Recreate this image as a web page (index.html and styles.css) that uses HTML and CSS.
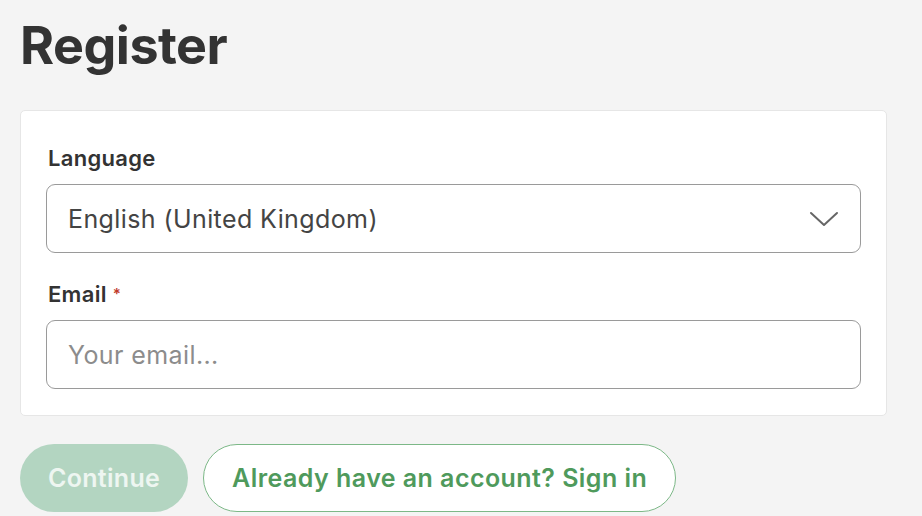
FILE: index.html
```html
<!DOCTYPE html>
<html lang="en">
<head>
    <meta charset="UTF-8">
    <meta name="viewport" content="width=device-width, initial-scale=1.0">
    <title>Register</title>
    <link rel="stylesheet" href="styles.css">
</head>
<body>
    <div class="page">
        <h1>Register</h1>

        <!-- Form card -->
        <div class="card">
            <div class="field">
                <label for="language">Language</label>
                <div class="select" id="language">
                    <span>English (United Kingdom)</span>
                    <svg width="30" height="18" viewBox="0 0 30 18">
                        <path d="M2 3 L15 15 L28 3" fill="none" stroke="#666" stroke-width="2" stroke-linecap="round" stroke-linejoin="round"/>
                    </svg>
                </div>
            </div>
            <div class="field">
                <label for="email">Email <span class="required">*</span></label>
                <input type="text" id="email" placeholder="Your email...">
            </div>
        </div>

        <!-- Actions -->
        <div class="actions">
            <button class="btn-primary" disabled>Continue</button>
            <button class="btn-outline">Already have an account? Sign in</button>
        </div>
    </div>
</body>
</html>
```

FILE: styles.css
```css
* {
    margin: 0;
    padding: 0;
    box-sizing: border-box;
}

body {
    font-family: Inter, 'Noto Sans', sans-serif;
    background-color: #f4f4f4;
    color: #333;
}

.page {
    padding: 14px 35px 0 20px;
}

h1 {
    font-size: 52px;
    font-weight: 700;
    color: #333;
    letter-spacing: -0.5px;
    line-height: 64px;
    margin-bottom: 32px;
}

/* Card */
.card {
    background: #fff;
    border: 1px solid #e6e6e6;
    border-radius: 5px;
    padding: 34px 25px 26px 25px;
    display: flex;
    flex-direction: column;
    gap: 28px;
}

.field label {
    display: block;
    font-size: 22px;
    font-weight: 600;
    letter-spacing: 0.3px;
    color: #333;
    margin-bottom: 13px;
    padding-left: 2px;
    line-height: 26px;
}

.required {
    color: #c0392b;
    font-size: 15px;
    vertical-align: top;
}

.select,
.field input {
    width: 100%;
    height: 69px;
    border: 1.5px solid #9a9a9a;
    border-radius: 9px;
    background: #fff;
    font-family: inherit;
    font-size: 25px;
    letter-spacing: 0.4px;
    color: #444;
    padding: 0 21px;
}

.select {
    display: flex;
    align-items: center;
    justify-content: space-between;
}

.field input::placeholder {
    color: #8c8c8c;
}

/* Buttons */
.actions {
    display: flex;
    gap: 15px;
    margin-top: 28px;
}

.actions button {
    height: 68px;
    border-radius: 34px;
    font-family: inherit;
    font-size: 25px;
    letter-spacing: 0.3px;
    font-weight: 600;
    padding: 0 28px;
}

.actions .btn-primary {
    background: #b3d5c1;
    color: #eef6f1;
    border: none;
}

.actions .btn-outline {
    background: #fff;
    color: #4f9a5c;
    border: 1.5px solid #7cb887;
    letter-spacing: 0.45px;
    padding: 0 28px;
}
```
